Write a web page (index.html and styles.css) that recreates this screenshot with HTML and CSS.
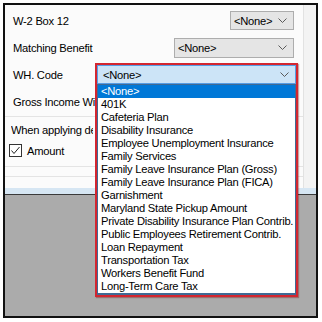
FILE: index.html
```html
<!DOCTYPE html>
<html lang="en">
<head>
    <meta charset="UTF-8">
    <title>WH. Code</title>
    <link rel="stylesheet" href="styles.css">
</head>
<body>
    <div class="frame">
        <div class="dialog">
            <div class="panel">
                <div class="row">
                    <span class="label">W-2 Box 12</span>
                    <div class="combo combo-small"><span>&lt;None&gt;</span><svg class="chev" width="9" height="5" viewBox="0 0 9 5"><polyline points="0.5,0.5 4.5,4.5 8.5,0.5" fill="none" stroke="#5a5a5a" stroke-width="1"/></svg></div>
                </div>
                <div class="row">
                    <span class="label">Matching Benefit</span>
                    <div class="combo combo-wide"><span>&lt;None&gt;</span><svg class="chev" width="9" height="5" viewBox="0 0 9 5"><polyline points="0.5,0.5 4.5,4.5 8.5,0.5" fill="none" stroke="#5a5a5a" stroke-width="1"/></svg></div>
                </div>
                <div class="row">
                    <span class="label">WH. Code</span>
                </div>
                <div class="row">
                    <span class="label clip">Gross Income Withholding</span>
                </div>
                <div class="group">
                    <div class="group-title clip">When applying deductions use</div>
                    <label class="check"><span class="box"><svg width="11" height="11" viewBox="0 0 11 11"><polyline points="1.5,5.5 4,8.5 9.5,2" fill="none" stroke="#222" stroke-width="1"/></svg></span>Amount</label>
                </div>
                <div class="rule"></div>
            </div>
            <div class="strip"></div>
        </div>
        <div class="bluebar"></div>
        <div class="gray"></div>

        <div class="popup">
            <div class="popup-combo"><span>&lt;None&gt;</span><svg class="chev" width="9" height="5" viewBox="0 0 9 5"><polyline points="0.5,0.5 4.5,4.5 8.5,0.5" fill="none" stroke="#5a5a5a" stroke-width="1"/></svg></div>
            <ul class="list">
                <li class="selected">&lt;None&gt;</li>
                <li>401K</li>
                <li>Cafeteria Plan</li>
                <li>Disability Insurance</li>
                <li>Employee Unemployment Insurance</li>
                <li>Family Services</li>
                <li>Family Leave Insurance Plan (Gross)</li>
                <li>Family Leave Insurance Plan (FICA)</li>
                <li>Garnishment</li>
                <li>Maryland State Pickup Amount</li>
                <li>Private Disability Insurance Plan Contrib.</li>
                <li>Public Employees Retirement Contrib.</li>
                <li>Loan Repayment</li>
                <li>Transportation Tax</li>
                <li>Workers Benefit Fund</li>
                <li>Long-Term Care Tax</li>
            </ul>
        </div>
    </div>
</body>
</html>
```
FILE: styles.css
```css
body {
    margin: 0;
    background-color: white;
    font-family: "Liberation Sans", Arial, sans-serif;
    font-size: 11.2px;
    letter-spacing: -0.25px;
    color: #000;
}
.frame {
    position: relative;
    margin: 3px;
    width: 311px;
    height: 311px;
    border: 2px solid #111;
    display: flex;
    flex-direction: column;
    overflow: hidden;
}
.dialog {
    display: flex;
    height: 183px;
    background-color: #fbfbfb;
}
.panel {
    flex: 1;
    padding-top: 2px;
    border-right: 1px solid #e2e2e2;
}
.strip {
    width: 12px;
    background-color: #f3f3f3;
}
.row {
    height: 27px;
    display: flex;
    align-items: center;
    justify-content: space-between;
    padding: 0 9px 0 8px;
}
.label {
    white-space: nowrap;
}
.clip {
    max-width: 82px;
    overflow: hidden;
}
.combo {
    height: 19px;
    border: 1px solid #adadad;
    background-color: #e5e5e5;
    display: flex;
    align-items: center;
    justify-content: space-between;
    padding: 0 4px 0 3px;
    box-sizing: border-box;
}
.combo-small {
    width: 64px;
}
.combo-wide {
    width: 120px;
    height: 20px;
}
.chev {
    margin-right: 2px;
}
.group {
    border-top: 1px solid #e4e4e4;
    margin-top: 1px;
    padding: 7px 0 0 6px;
}
.group-title {
    white-space: nowrap;
}
.check {
    display: flex;
    align-items: center;
    gap: 5px;
    margin-top: 8px;
    margin-left: -2px;
}
.box {
    width: 11px;
    height: 11px;
    border: 1px solid #333;
    background-color: white;
    display: flex;
}
.rule {
    height: 9px;
    margin-top: 9px;
    border-top: 1px solid #e4e4e4;
    border-bottom: 1px solid #e4e4e4;
}
.bluebar {
    height: 6px;
    background-color: #d6e6f3;
    border-bottom: 1px solid #3a3a3a;
}
.gray {
    flex: 1;
    background-color: #ababab;
}
.popup {
    position: absolute;
    left: 90px;
    top: 58px;
    width: 199px;
    border: 2px solid #d32630;
    box-shadow: 1px 1px 1px rgba(120, 0, 0, 0.35);
    background-color: white;
}
.popup-combo {
    height: 19px;
    border: 1px solid #569de5;
    background-color: #cce4f7;
    display: flex;
    align-items: center;
    justify-content: space-between;
    padding: 0 4px 0 5px;
    box-sizing: border-box;
}
.list {
    list-style: none;
    margin: 0;
    padding: 0;
    border: 1px solid #3f6a94;
    border-bottom-width: 2px;
}
.list li {
    height: 13px;
    line-height: 13px;
    padding-left: 3px;
    white-space: nowrap;
}
.list .selected {
    background-color: #0078d7;
    color: white;
}
```
